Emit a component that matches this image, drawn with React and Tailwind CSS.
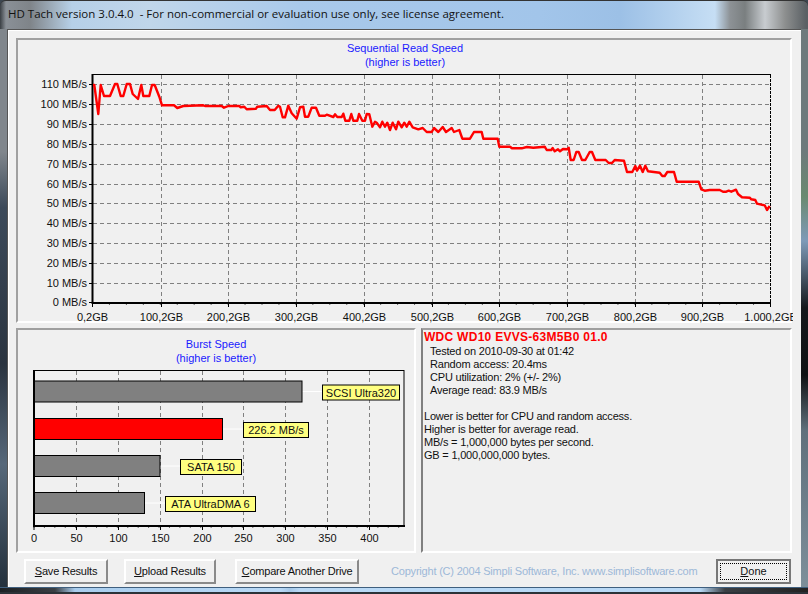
import React from "react";

const sans = "font-['Liberation_Sans',Arial,sans-serif]";

const speedLine =
  "93,85 94.3,85 98.3,114 100.7,85 104,96 110,96 115,84 117.3,84 120.7,96 123.3,96 126.7,84 130,84 132.7,94 138,99 141.3,85 143.3,96 149.3,96 152,85 154.7,85 159.3,96.7 162,105.3 174,105.3 177.3,108 183.3,106 203.3,105.3 205,106 221.7,106 224,107.7 228.3,106 239.3,106 240.7,107.3 244.3,106.7 246.7,109.3 256,108.7 257.3,106.7 266.7,106 270,110 274.7,110 278.3,105.7 280,106.7 282.7,117.3 285,117.3 288.3,105.7 291.7,113.3 296.7,118.7 300,107.3 303.3,106.7 305,116.7 308.3,116.7 311.7,107.7 316,107.7 319.3,115.7 325,115.7 326.7,114.7 333.3,117 335,114.3 337.3,117 341.7,117 343.3,113.7 345.3,120.7 349.3,120.7 351.3,114 353.3,120.7 357.3,120.7 359,114 362.3,120.7 365,120.7 366.7,114 369.3,114.3 372.3,126.7 375,121.7 376.7,122.7 380,127.3 382.3,121.7 385,126.7 387.3,122.7 390,130 392.7,122.7 396,129.3 398.3,121.7 401.7,127.3 404.3,122.7 406.7,126.7 409.3,121.7 412.7,127.3 418.3,129.3 422.7,128 426.7,132 431.7,132 434,128 438.3,132 442.7,127 446,132 451.7,128 454,132 459.3,130 462.3,138.7 470,138.7 474,132 481.7,132 483.3,138.7 497.7,138.7 499.3,146.7 510,146.7 512,148.3 521.7,148.3 526.7,147 533.3,147.7 544.7,146.7 546.7,150 551.3,150 552.7,148 554.7,151.3 558,149.3 560,151.3 563,149 567.3,149.3 568.7,147.7 570.7,160 573.7,160 576.3,152 578.7,152 582,160 585.3,160 589.7,152 592,152 595.3,160 605.7,160 608.7,163 612,163 614.7,160 624,160.7 627,172 632.3,172 635.3,166 637,170.7 640,165.7 642.7,172 645.3,165.7 648,171.3 659.7,172.7 662.3,176 664.7,176 667.3,172 674,172 676.7,181.7 698.7,181.7 701.3,189.3 704.7,190.7 709.7,190 719.7,190 723,191.7 726.3,191.7 728.7,190.7 731.3,191.7 736,189.7 738,194 742,197.3 749.7,197.7 751.3,199.3 755.3,200 757,203.7 764.7,205.3 767,210 769.7,206";

const speedRows = [
  [110, 84.5],
  [100, 104.5],
  [90, 124.5],
  [80, 144.5],
  [70, 164.5],
  [60, 184.5],
  [50, 203.5],
  [40, 223.5],
  [30, 243.5],
  [20, 263.5],
  [10, 283.5],
  [0, 302.5],
];

const speedCols = [
  ["0,2GB", 92.5],
  ["100,2GB", 161.5],
  ["200,2GB", 228.5],
  ["300,2GB", 296.5],
  ["400,2GB", 364.5],
  ["500,2GB", 432.5],
  ["600,2GB", 499.5],
  ["700,2GB", 567.5],
  ["800,2GB", 635.5],
  ["900,2GB", 702.5],
  ["1.000,2GB", 770.5],
];

const burstCols = [
  [0, 34],
  [50, 76.5],
  [100, 118.5],
  [150, 160.5],
  [200, 202.5],
  [250, 243.5],
  [300, 285.5],
  [350, 327.5],
  [400, 369.5],
];

const burstBars = [
  { y: 381, end: 302, fill: "#808080", label: "SCSI Ultra320", lx: 322.5, lw: 77 },
  { y: 418.5, end: 222.5, fill: "#ff0000", label: "226.2 MB/s", lx: 243.5, lw: 65 },
  { y: 455.5, end: 160, fill: "#808080", label: "SATA 150", lx: 180.5, lw: 61 },
  { y: 492.5, end: 144.5, fill: "#808080", label: "ATA UltraDMA 6", lx: 165.5, lw: 90 },
];

function SpeedChart() {
  const minor = [];
  for (let i = 0; i < 41; i++) minor.push(92.5 + i * 16.95);
  return (
    <svg viewBox="18 40 775 283" className={`block w-[775px] max-w-none h-[283px] text-[11px] ${sans}`}>
      <text x="405" y="52" textAnchor="middle" fill="#1a1aff">Sequential Read Speed</text>
      <text x="405" y="66" textAnchor="middle" fill="#1a1aff">(higher is better)</text>
      {speedRows.slice(0, 11).map(([v, y]) => (
        <line key={v} x1="93" x2="770" y1={y} y2={y} stroke="#808080" strokeDasharray="4 3" />
      ))}
      {speedCols.slice(1, 10).map(([l, x]) => (
        <line key={l} x1={x} x2={x} y1="75" y2="302" stroke="#808080" strokeDasharray="4 3" />
      ))}
      {speedRows.map(([v, y]) => (
        <g key={v}>
          <line x1="89" x2="93" y1={y} y2={y} stroke="#000" />
          <text x="87" y={y + 3.5} textAnchor="end" fill="#111">{v} MB/s</text>
        </g>
      ))}
      {minor.map((x) => (
        <line key={x} x1={x} x2={x} y1="303" y2="305" stroke="#666" />
      ))}
      {speedCols.map(([l, x]) => (
        <g key={l}>
          <line x1={x} x2={x} y1="303" y2="307" stroke="#000" />
          <text x={x} y="321" textAnchor="middle" fill="#111">{l}</text>
        </g>
      ))}
      <line x1="92" x2="771" y1="74.5" y2="74.5" stroke="#000" />
      <line x1="770.5" x2="770.5" y1="75" y2="302" stroke="#000" strokeDasharray="3 1" />
      <line x1="92.5" x2="92.5" y1="74" y2="304" stroke="#000" strokeWidth="2" />
      <line x1="92" x2="771" y1="303" y2="303" stroke="#000" strokeWidth="2" />
      <polyline points={speedLine} fill="none" stroke="#ff0000" strokeWidth="2.4" strokeLinejoin="round" />
    </svg>
  );
}

function BurstChart() {
  const minor = [];
  for (let i = 0; i < 36; i++) minor.push(34 + i * 10.42);
  return (
    <svg viewBox="18 330 396 221" className={`block w-[396px] h-[221px] text-[11px] ${sans}`}>
      <text x="216" y="348" textAnchor="middle" fill="#1a1aff">Burst Speed</text>
      <text x="216" y="362" textAnchor="middle" fill="#1a1aff">(higher is better)</text>
      {burstCols.slice(1).map(([v, x]) => (
        <line key={v} x1={x} x2={x} y1="371" y2="525" stroke="#808080" strokeDasharray="4 3" />
      ))}
      {burstBars.map((b) => (
        <g key={b.label}>
          <line x1={b.end} x2={b.lx} y1={b.y + 10.5} y2={b.y + 10.5} stroke="#fff" />
          <rect x="34" y={b.y} width={b.end - 34} height="21" fill={b.fill} stroke="#000" />
          <rect x={b.lx} y={b.y + 4} width={b.lw} height="15" fill="#ffff80" stroke="#000" />
          <text x={b.lx + b.lw / 2} y={b.y + 15.5} textAnchor="middle" fill="#111">{b.label}</text>
        </g>
      ))}
      {minor.map((x) => (
        <line key={x} x1={x} x2={x} y1="526" y2="528" stroke="#666" />
      ))}
      {burstCols.map(([v, x]) => (
        <g key={v}>
          <line x1={x} x2={x} y1="526" y2="530" stroke="#000" />
          <text x={x} y="542" textAnchor="middle" fill="#111">{v}</text>
        </g>
      ))}
      <rect x="34" y="370.5" width="370" height="155" fill="none" stroke="#000" />
      <line x1="34" x2="34" y1="370" y2="527" stroke="#000" strokeWidth="2" />
      <line x1="33" x2="405" y1="526" y2="526" stroke="#000" strokeWidth="2" />
    </svg>
  );
}

function Btn({ hot, rest, className }) {
  return (
    <button className={`shrink-0 whitespace-nowrap h-[25px] border-2 border-t-white border-l-white border-r-[#8a8a8a] border-b-[#8a8a8a] bg-[#f0f0f0] text-[11px] tracking-[-0.2px] text-[#111] ${sans} ${className}`}>
      <u>{hot}</u>
      {rest}
    </button>
  );
}

export default function App() {
  return (
    <div className={`w-[808px] h-[594px] flex flex-col overflow-hidden bg-[#3c4650] ${sans}`}>
      {/* title bar */}
      <div className="h-[29px] shrink-0 flex items-center pl-2 pb-[2px] rounded-t-md border-t border-[#333] bg-[linear-gradient(90deg,#3a3f44_0px,#8a9097_6px,#7f8489_30px,#a6b8c8_58px,#b6d0e8_72px,#c0d6ea_150px,#a9c9ea_300px,#a2c5ea_540px,#9cc0e6_620px,#c6def4_715px,#8d9296_730px,#7a7f80_745px,#c8ccd0_765px,#8d8f8f_785px,#5a6064_806px)]">
        <span className="whitespace-pre font-['Open_Sans',sans-serif] text-[11.5px] text-[#111]">
          HD Tach version 3.0.4.0  - For non-commercial or evaluation use only, see license agreement.
        </span>
      </div>

      <div className="flex-1 flex min-h-0">
        <div className="w-[7px] shrink-0 bg-[linear-gradient(180deg,#80868c,#80868c_22%,#3c4a5a_32%,#2a3440_60%,#56687a_78%,#23303c)]" />
        {/* client area */}
        <div className="w-[794px] h-[558px] shrink-0 flex flex-col border-t border-l border-[#555] bg-[#f0f0f0] pt-2 pl-2 shadow-[inset_1px_1px_0_#fff]">
          <div className="w-[776px] h-[285px] border-2 border-t-[#a0a0a0] border-l-[#a0a0a0] border-r-white border-b-white">
            <SpeedChart />
          </div>
          <div className="flex gap-[5px] mt-[5px] w-[776px] h-[225px]">
            <div className="w-[400px] border-2 border-t-[#a0a0a0] border-l-[#a0a0a0] border-r-white border-b-white overflow-hidden">
              <BurstChart />
            </div>
            <div className="flex-1 border-2 border-t-[#a0a0a0] border-l-[#808080] border-r-white border-b-white pl-[1px] pt-px text-[11px] tracking-[-0.2px] leading-[13px] text-[#111]">
              <div className="text-[12px] font-bold tracking-[0.28px] text-[#ff0000] mb-px">WDC WD10 EVVS-63M5B0 01.0</div>
              <div className="pl-[6px]">
                <div>Tested on 2010-09-30 at 01:42</div>
                <div>Random access: 20.4ms</div>
                <div>CPU utilization: 2% (+/- 2%)</div>
                <div>Average read: 83.9 MB/s</div>
              </div>
              <div className="mt-[13px]">
                <div>Lower is better for CPU and random access.</div>
                <div>Higher is better for average read.</div>
                <div>MB/s = 1,000,000 bytes per second.</div>
                <div>GB = 1,000,000,000 bytes.</div>
              </div>
            </div>
          </div>
          {/* footer buttons */}
          <div className="flex items-center mt-[6px] w-[775px] pl-[8px]">
            <Btn hot="S" rest="ave Results" className="w-[84px]" />
            <Btn hot="U" rest="pload Results" className="w-[92px] ml-4" />
            <Btn hot="C" rest="ompare Another Drive" className="w-[124px] ml-[19px]" />
            <span className="ml-[32px] text-[11px] tracking-[-0.2px] whitespace-nowrap text-[#9db8d8]">
              Copyright (C) 2004 Simpli Software, Inc. www.simplisoftware.com
            </span>
            <button className="ml-auto w-[75px] h-[25px] p-[2px] border-2 border-[#777] bg-[#f0f0f0] text-[11px] text-[#111]">
              <span className="block w-full h-full leading-[15px] border border-dotted border-black">
                <u>D</u>one
              </span>
            </button>
          </div>
        </div>
        <div className="w-[7px] shrink-0 bg-[linear-gradient(180deg,#6e7a7c,#6e7a7c_22%,#6a8a70_30%,#7e9ab8_38%,#15181c_50%,#101214_62%,#60707c_72%,#7d8f9a)]" />
      </div>

      {/* bottom frame */}
      <div className="h-[7px] shrink-0 border-t border-b-2 border-t-[#3f5f7e] border-b-[#2c3238] bg-[linear-gradient(90deg,#1c2024,#3a3f44_55px,#a9cdee_75px,#b9d9f6_280px,#a5c8e8_290px,#b9d9f6_300px,#b9d9f6_700px,#3a3f44_725px,#222)]" />
    </div>
  );
}
